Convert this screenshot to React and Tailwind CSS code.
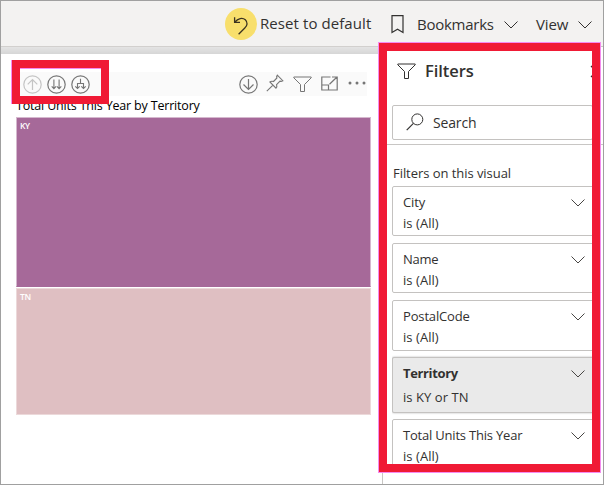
const FILTERS = [
  { name: "City", value: "is (All)", nameTrack: "tracking-[-0.1px]", height: "h-[50px]", mb: "mb-[7px]" },
  { name: "Name", value: "is (All)", nameTrack: "tracking-[-0.3px]", height: "h-[50px]", mb: "mb-[7px]" },
  { name: "PostalCode", value: "is (All)", nameTrack: "tracking-[-0.15px]", height: "h-[51px]", mb: "mb-[6px]" },
  { name: "Territory", value: "is KY or TN", nameTrack: "tracking-[-0.35px]", active: true, height: "h-[56px]", mb: "mb-[6px]" },
  { name: "Total Units This Year", value: "is (All)", nameTrack: "tracking-[-0.2px]", height: "h-[50px]", mb: "" },
];

function Icon({ w, h, className = "", children }) {
  return (
    <svg width={w} height={h} viewBox={`0 0 ${w} ${h}`} fill="none" stroke="currentColor" className={`shrink-0 ${className}`}>
      {children}
    </svg>
  );
}

function Chevron({ className = "" }) {
  return (
    <Icon w={14} h={8} className={className}>
      <path d="M.5 .5 7 7 13.5 .5" />
    </Icon>
  );
}

function Funnel({ className = "" }) {
  return (
    <Icon w={19} h={17} className={className}>
      <path d="M.8 1H18.2V1.8L11.5 8.5V15.5H7.5V8.5L.8 1.8Z" />
    </Icon>
  );
}

function Toolbar() {
  return (
    <header className="flex h-[45px] shrink-0 items-center bg-[#f3f2f1] text-[15px] text-[#323130]">
      <div className="ml-[224px] flex size-8 items-center justify-center rounded-full bg-[#f8df6c]">
        <Icon w={16} h={19} className="mt-[3px] text-[#3b3320]">
          <path d="M1.6 1.2V6.3H7M1.8 6.1C5 2.2 9.5 1.2 12.3 3.8C15 6.4 14.4 9.6 11.8 12L5.6 18.2" strokeWidth="1.3" />
        </Icon>
      </div>
      <span className="ml-[3px] w-[131px] whitespace-nowrap tracking-[0.08px]">Reset to default</span>
      <Icon w={13} h={19} className="mt-[2px]">
        <path d="M1 .7H12V17.5L6.5 14.2 1 17.5Z" strokeWidth="1.2" />
      </Icon>
      <span className="ml-[13px] mt-[2px] w-[87px] tracking-[-0.25px]">Bookmarks</span>
      <Chevron className="mt-[3px]" />
      <span className="ml-[18px] mt-[2px] w-[42px] tracking-[-0.1px]">View</span>
      <Chevron className="mt-[3px]" />
    </header>
  );
}

function VisualHeader() {
  return (
    <div className="mx-[15px] mt-[18px] flex h-[24px] items-center bg-[#fafafa] pl-[7px] text-[#767676]">
      <Icon w={19} h={19} className="text-[#c4c4c4]">
        <circle cx="9.5" cy="9.5" r="8.7" strokeWidth="1.2" />
        <path d="M9.5 15V4.5M4.7 9.3 9.5 4.5 14.3 9.3" strokeWidth="1.2" />
      </Icon>
      <Icon w={19} h={19} className="ml-[5px]">
        <circle cx="9.5" cy="9.5" r="8.7" strokeWidth="1.2" />
        <path d="M6.9 4.5V13.5M12.1 4.5V13.5M4.7 11.4 6.9 13.6 9.1 11.4M9.9 11.4 12.1 13.6 14.3 11.4" strokeWidth="1.1" />
      </Icon>
      <Icon w={19} h={19} className="ml-[5px]">
        <circle cx="9.5" cy="9.5" r="8.7" strokeWidth="1.2" />
        <path d="M9.5 3.8V8.5M6.5 13.2V8.5H12.5V13.2M4.3 11.3 6.5 13.5 8.7 11.3M10.3 11.3 12.5 13.5 14.7 11.3" strokeWidth="1.1" />
      </Icon>
      <Icon w={19} h={19} className="ml-[149px]">
        <circle cx="9.5" cy="9.5" r="8.7" strokeWidth="1.2" />
        <path d="M9.5 4V14.3M4.5 9.5 9.5 14.5 14.5 9.5" strokeWidth="1.2" />
      </Icon>
      <Icon w={18} h={18} className="mb-[3px] ml-[8px]">
        <path d="M11.3 1.2 16.8 6.7 15.2 7.4 14 7.2 10.6 10.7C11.2 12.4 10.7 13.4 10 14.1L3.9 8C5 7 6.2 7 7.5 7.5L10.9 4L10.6 2.5ZM7 11.2 .8 17.2" strokeWidth="1.1" />
      </Icon>
      <Funnel className="ml-[9px]" />
      <Icon w={17} h={15} className="mb-[2px] ml-[9px]">
        <path d="M9.5 1H.8V14H16.2V6M.8 9H7.5V14M11 1H16.2V6M16 1 8.5 8.2" strokeWidth="1.2" />
      </Icon>
      <Icon w={19} h={4} className="mb-[2px] ml-[10px]">
        <g fill="currentColor" stroke="none">
          <circle cx="2" cy="2" r="1.5" />
          <circle cx="9" cy="2" r="1.5" />
          <circle cx="16" cy="2" r="1.5" />
        </g>
      </Icon>
    </div>
  );
}

function Report() {
  return (
    <main className="flex w-[381px] shrink-0 flex-col">
      <div className="h-[8px] shrink-0 border-t border-[#d2d0ce] bg-linear-to-b from-[#e4e4e4] to-[#d6d6d6]" />
      <VisualHeader />
      <h1 className="ml-[15px] mt-[1px] h-[20px] whitespace-nowrap text-[12.5px] leading-[18px] tracking-[-0.18px] text-black">
        Total Units This Year by Territory
      </h1>
      <div className="ml-[15px] flex w-[355px] flex-col text-[8.5px] font-semibold leading-[10px] tracking-[-0.4px] text-white">
        <div className="h-[170px] border border-[#d5b8ce] border-b-[#a66999] bg-[#a66999] pl-[3px] pt-[3px]">KY</div>
        <div className="mt-px h-[127px] border border-[#ecd9da] bg-[#dfbfc2] pl-[3px] pt-[3px]">TN</div>
      </div>
    </main>
  );
}

function FilterCard({ filter }) {
  const active = filter.active;
  return (
    <div className={`flex w-[220px] shrink-0 justify-between rounded-[2px] border border-[#c4c2c0] pl-[10px] ${filter.height} ${filter.mb} ${active ? "bg-[#eaeaea] shadow-[0_0_2px_#aaa]" : "bg-white"}`}>
      <div className={`whitespace-nowrap text-[13px] text-[#323130] ${active ? "pt-[3px] leading-[24px]" : "pt-[5px] leading-[21px]"}`}>
        <div className={`${filter.nameTrack} ${active ? "font-bold" : ""}`}>{filter.name}</div>
        <div className="tracking-[0.05px]">{filter.value}</div>
      </div>
      <Chevron className="mr-[26px] mt-[12px] text-[#484644]" />
    </div>
  );
}

function FilterPane() {
  return (
    <aside className="flex min-w-0 flex-1 flex-col border-l border-t border-[#c8c6c4] bg-white">
      <div className="flex h-[418px] w-full flex-col overflow-hidden text-[#323130]">
        <div className="ml-[14px] mt-[13px] flex h-[22px] w-[220px] shrink-0 items-center">
          <Funnel />
          <h2 className="ml-[9px] w-[165px] text-[16.5px] font-semibold tracking-[-0.05px]">Filters</h2>
          <Icon w={8} h={13}>
            <path d="M1 1 6.5 6.5 1 12" strokeWidth="1.2" />
          </Icon>
        </div>
        <div className="ml-[9px] mt-[23px] flex h-[35px] w-[201px] shrink-0 items-center rounded-[2px] border border-[#c4c2c0] pl-[13px]">
          <Icon w={18} h={18} className="mb-[2px]">
            <circle cx="11.3" cy="6.4" r="5.5" />
            <path d="M7.4 10.4.7 17.1" strokeWidth="1.2" />
          </Icon>
          <span className="ml-[9px] text-[14px] tracking-[-0.15px]">Search</span>
        </div>
        <div className="mt-[4px] h-px w-full shrink-0 bg-[#c8c6c4]" />
        <h3 className="ml-[10px] mt-[18px] h-[23px] shrink-0 whitespace-nowrap text-[13px] leading-[20px] tracking-[-0.05px]">Filters on this visual</h3>
        <div className="ml-[9px] flex w-[205px] flex-col overflow-hidden">
          {FILTERS.map((f) => (
            <FilterCard key={f.name} filter={f} />
          ))}
        </div>
      </div>
    </aside>
  );
}

export default function App() {
  return (
    <div className="relative flex h-[485px] w-[604px] flex-col overflow-hidden border border-[#a0a0a0] bg-white font-['Open_Sans',sans-serif]">
      <Toolbar />
      <div className="flex min-h-0 flex-1">
        <Report />
        <FilterPane />
      </div>
      <div className="absolute left-[11px] top-[59px] h-[44px] w-[97px] border-8 border-[#f01a35] shadow-[-1px_0_0_#f58cf0,inset_0_1px_0_#f58cf0]" />
      <div className="absolute left-[378px] top-[42px] h-[429px] w-[221px] border-8 border-[#f01a35] shadow-[0_0_0_1px_#f58cf0]" />
    </div>
  );
}
